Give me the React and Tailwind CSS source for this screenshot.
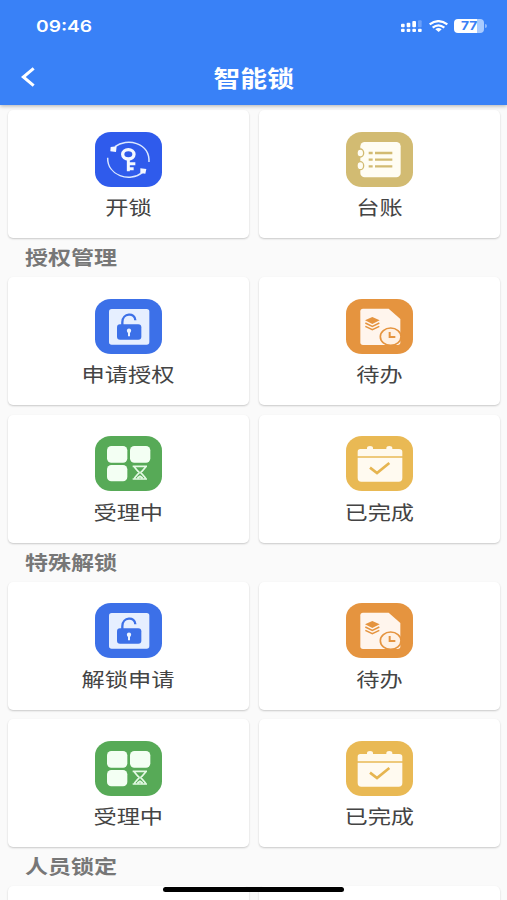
import React from "react";

function UnlockIcon() {
  return (
    <svg viewBox="45 35 201 165" className="w-[67px] h-[55px]">
      <rect x="45" y="35" width="201" height="165" rx="48" ry="44" fill="#2f5bec" />
      <g fill="none" stroke="#dbe8ff" strokeWidth="4.5">
        <path d="M105 79C140 52 209 66 207 125" />
        <path d="M83 112C82 165 148 188 188 156" />
      </g>
      <path d="M92 80l18-2-2 17-17-2zM181 144l18 2-3 14-15-2z" fill="#f4f8ff" />
      <ellipse cx="145" cy="102" rx="17" ry="14" fill="none" stroke="#f4f8ff" strokeWidth="10" />
      <path d="M145 116v37M145 130h21M145 145h16" fill="none" stroke="#f4f8ff" strokeWidth="9" />
    </svg>
  );
}

function LedgerIcon() {
  return (
    <svg viewBox="47 35 201 165" className="w-[67px] h-[55px]">
      <rect x="47" y="35" width="201" height="165" rx="48" ry="44" fill="#d2bb72" />
      <rect x="90" y="65" width="121" height="106" rx="13" fill="#fffdf3" />
      <g fill="#fffdf3" stroke="#d2bb72" strokeWidth="4">
        <ellipse cx="90" cy="98" rx="10" ry="12" />
        <ellipse cx="90" cy="136" rx="10" ry="12" />
      </g>
      <path
        d="M115 98h12M134 98h52M115 118h12M134 118h52M115 138h12M134 138h52"
        stroke="#d2bb72"
        strokeWidth="7"
      />
    </svg>
  );
}

function ApplyIcon() {
  return (
    <svg viewBox="45 41 201 165" className="w-[67px] h-[55px]">
      <rect x="45" y="41" width="201" height="165" rx="48" ry="44" fill="#3c70e8" />
      <rect x="87" y="71" width="121" height="107" rx="8" fill="#e6efff" />
      <path d="M127 121v-10c0-29 39-30 39-6" fill="none" stroke="#3c70e8" strokeWidth="7" />
      <rect x="111" y="117" width="73" height="46" rx="9" fill="#3c70e8" />
      <circle cx="147" cy="136" r="6.5" fill="#edf4ff" />
      <path d="M147 138v15" stroke="#edf4ff" strokeWidth="6" />
    </svg>
  );
}

function TodoIcon() {
  return (
    <svg viewBox="47 40 201 165" className="w-[67px] h-[55px]">
      <rect x="47" y="40" width="201" height="165" rx="48" ry="44" fill="#e5943f" />
      <path
        d="M98 69h77l35 31v70q0 8-8 8H98q-8 0-8-8V77q0-8 8-8z"
        fill="#fff5ed"
      />
      <path d="M104 104l22-10 22 10-22 11z" fill="#e5943f" />
      <path
        d="M105 112l21 10 21-10M105 122l21 10 21-10"
        fill="none"
        stroke="#e5943f"
        strokeWidth="4.5"
      />
      <ellipse cx="181" cy="153" rx="31" ry="26" fill="#fff1e4" stroke="#e5943f" strokeWidth="5" />
      <path d="M178 139v15h17" fill="none" stroke="#e5943f" strokeWidth="6" />
    </svg>
  );
}

function ProcessingIcon() {
  return (
    <svg viewBox="45 34 201 165" className="w-[67px] h-[55px]">
      <rect x="45" y="34" width="201" height="165" rx="48" ry="44" fill="#57aa57" />
      <g fill="#f3fff3">
        <rect x="81" y="64" width="61" height="50" rx="13" />
        <rect x="150" y="64" width="61" height="50" rx="13" />
        <rect x="81" y="121" width="61" height="49" rx="13" />
      </g>
      <path
        d="M158 125h43M158 163h43M163 127l11 13q7 4 0 8l-11 13M197 127l-11 13q-7 4 0 8l11 13M172 160l8-5 8 5"
        fill="none"
        stroke="#e4fae4"
        strokeWidth="5"
      />
    </svg>
  );
}

function DoneIcon() {
  return (
    <svg viewBox="47 34 201 165" className="w-[67px] h-[55px]">
      <rect x="47" y="34" width="201" height="165" rx="48" ry="44" fill="#e9b954" />
      <path
        d="M82 95V81q0-8 8-8h20v-3q0-6 9-6t9 6v3h40v-3q0-6 9-6t9 6v3h20q10 0 10 8v14z"
        fill="#fff9ec"
      />
      <path d="M82 99h134v61q0 11-11 11H93q-11 0-11-11z" fill="#fffaf0" />
      <path d="M119 129l21 16 37-30" fill="none" stroke="#e6b551" strokeWidth="8" />
    </svg>
  );
}

const SECTIONS = [
  {
    title: "授权管理",
    items: [
      { label: "申请授权", icon: ApplyIcon },
      { label: "待办", icon: TodoIcon },
      { label: "受理中", icon: ProcessingIcon },
      { label: "已完成", icon: DoneIcon },
    ],
  },
  {
    title: "特殊解锁",
    items: [
      { label: "解锁申请", icon: ApplyIcon },
      { label: "待办", icon: TodoIcon },
      { label: "受理中", icon: ProcessingIcon },
      { label: "已完成", icon: DoneIcon },
    ],
  },
];

const CARD_CLASS =
  "flex flex-col items-center h-32 pt-[21.5px] rounded-[5px] bg-white shadow-[0_1px_2px_rgba(0,0,0,0.2)]";

function Card({ label, icon: Icon }) {
  return (
    <button className={CARD_CLASS}>
      <Icon />
      <span className="mt-[8.5px] text-[19.5px] leading-6 text-[#444] scale-x-[1.19] whitespace-nowrap">
        {label}
      </span>
    </button>
  );
}

function CardGrid({ children }) {
  return <div className="grid grid-cols-2 gap-x-2.5 gap-y-[9.5px]">{children}</div>;
}

function SectionTitle({ children }) {
  return (
    <h2 className="h-[39px] pl-[17px] text-[19.5px] font-bold leading-[37px] text-[#777]">
      <span className="inline-block origin-left scale-x-[1.18]">{children}</span>
    </h2>
  );
}

function StatusBar() {
  return (
    <div className="flex items-center justify-between h-[51px] pl-9 pr-[20px]">
      <span className="font-['Inter'] text-[16px] font-semibold leading-none origin-left scale-x-[1.2]">
        09:46
      </span>
      <div className="flex items-center">
        <svg viewBox="0 0 63 36" className="w-[21px] h-3" fill="#fff">
          <rect x="0" y="11" width="11" height="11" rx="3" />
          <rect x="17" y="8" width="11" height="14" rx="3" />
          <rect x="34" y="3" width="11" height="19" rx="3" />
          <rect x="51" y="1" width="11" height="21" rx="3" opacity="0.25" />
          <rect x="0" y="26" width="11" height="10" rx="3" />
          <rect x="17" y="26" width="11" height="10" rx="3" />
          <rect x="34" y="26" width="11" height="10" rx="3" />
          <rect x="51" y="26" width="11" height="10" rx="3" />
        </svg>
        <svg viewBox="0 0 57 36" className="ml-[7px] w-[19px] h-3" fill="none" stroke="#fff" strokeWidth="7">
          <path d="M2 13Q28-6 55 13" />
          <path d="M11 23Q28 9 46 23" />
          <path d="M19 28Q28 20 38 28l-9 8z" fill="#fff" stroke="none" />
        </svg>
        <div className="ml-[6px] flex items-center justify-center w-[30px] h-[14px] rounded-[4px] bg-[linear-gradient(to_right,#fff_77%,#a9cbff_77%)]">
          <span className="font-['Inter'] text-[12px] font-bold leading-none text-[#3b80f5] scale-x-[1.15]">
            77
          </span>
        </div>
        <div className="ml-px w-[2px] h-1 rounded-r-full bg-[#8db8fd]" />
      </div>
    </div>
  );
}

export default function App() {
  return (
    <div className="relative w-full h-[900px] overflow-hidden bg-[#fafafa] font-['Noto_Sans_CJK_SC',sans-serif]">
      <header className="relative z-10 h-[105px] bg-[#3981f7] text-white shadow-[0_1px_4px_rgba(0,0,0,0.3)]">
        <StatusBar />
        <div className="grid grid-cols-[1fr_auto_1fr] items-center h-[52px]">
          <svg viewBox="0 0 42 60" className="ml-[21px] w-[14px] h-5" fill="none" stroke="#fff" strokeWidth="9">
            <path d="M38 4L7 30l31 26" />
          </svg>
          <h1 className="text-[22.5px] font-bold leading-none scale-x-[1.19]">智能锁</h1>
        </div>
      </header>

      <main className="pt-[5px] pl-2 pr-[7px]">
        <CardGrid>
          <Card label="开锁" icon={UnlockIcon} />
          <Card label="台账" icon={LedgerIcon} />
        </CardGrid>
        {SECTIONS.map((section) => (
          <section key={section.title}>
            <SectionTitle>{section.title}</SectionTitle>
            <CardGrid>
              {section.items.map((item) => (
                <Card key={item.label} {...item} />
              ))}
            </CardGrid>
          </section>
        ))}
        <section>
          <SectionTitle>人员锁定</SectionTitle>
          <CardGrid>
            <div className={CARD_CLASS} />
            <div className={CARD_CLASS} />
          </CardGrid>
        </section>
      </main>

      {/* Home indicator */}
      <div className="absolute left-[163px] bottom-2 z-10 w-[181px] h-[5px] rounded-full bg-black" />
    </div>
  );
}
